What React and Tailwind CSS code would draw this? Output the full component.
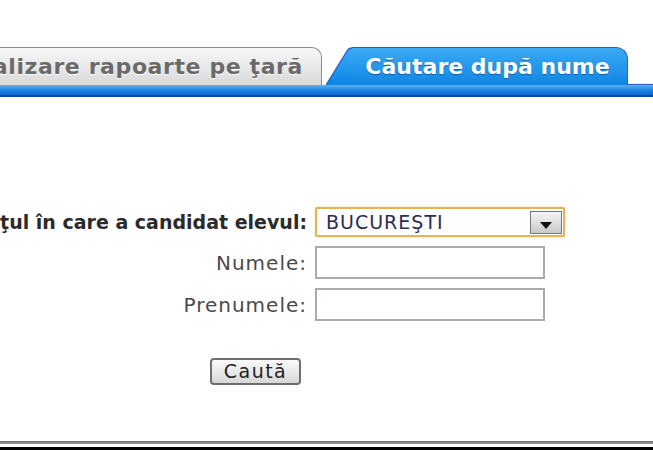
import React from 'react';

const font = "font-['DejaVu_Sans','Verdana',sans-serif]";

function Tabs() {
  return (
    <div>
      {/* tab row */}
      <div className="mt-[47px] flex h-[38px] items-end">
        <div className="flex h-[38px] w-[322px] items-center justify-end overflow-hidden whitespace-nowrap rounded-tr-[10px] border border-b-0 border-l-0 border-[#8e8e8e] bg-gradient-to-b from-[#f8f8f8] to-[#d9d9d9] pr-[18px] text-[22px] font-bold tracking-[0.6px] text-[#6a6a6a] [text-shadow:0_1px_0_#ffffff]">
          Vizualizare rapoarte pe ţară
        </div>
        <svg width="30" height="38" viewBox="0 0 30 38" className="block shrink-0">
          <defs>
            <linearGradient id="tabBlue" x1="0" y1="0" x2="0" y2="1">
              <stop offset="0" stopColor="#3aaaf4" />
              <stop offset="1" stopColor="#0c86e4" />
            </linearGradient>
          </defs>
          <path d="M4 38 L25 4 Q27 1 30 1 L30 38 Z" fill="url(#tabBlue)" />
          <path d="M4 38 L25 4 Q27 1 30 1" fill="none" stroke="#2f5fc4" strokeWidth="1.3" />
        </svg>
        <div className="flex h-[38px] w-[276px] items-center justify-center whitespace-nowrap rounded-tr-[12px] border-r border-t border-[#2f5fc4] bg-gradient-to-b from-[#3aaaf4] to-[#0c86e4] pb-[1px] pr-[4px] text-[22px] font-bold text-white [text-shadow:0_1px_1px_#0b5fb0]">
          Căutare după nume
        </div>
        <div className="h-[2px] flex-1 border-b border-[#2f5fc4] bg-[#dfeefc]" />
      </div>
      {/* blue band under the tabs */}
      <div className="h-[12px] border-b-2 border-[#0a47a8] bg-gradient-to-b from-[#5cb0f2] via-[#1b86e4] to-[#0b66d0]" />
    </div>
  );
}

function Field({ label, bold, children }) {
  return (
    <div className="flex items-center">
      <div
        className={
          'flex w-[307px] shrink-0 justify-end overflow-hidden whitespace-nowrap ' +
          (bold ? 'text-[19px] font-bold text-[#2b2b2b]' : 'text-[20px] tracking-[1px] text-[#4a4a4a]')
        }
      >
        {label}
      </div>
      <div className="ml-[8px]">{children}</div>
    </div>
  );
}

export default function App() {
  return (
    <div className={`relative flex h-[450px] w-[653px] flex-col overflow-hidden bg-white ${font}`}>
      <Tabs />

      {/* search form */}
      <div className="mt-[110px] flex flex-col">
        <Field label="Judeţul în care a candidat elevul:" bold>
          <div className="flex h-[30px] w-[250px] items-center justify-between rounded-[2px] border-2 border-[#e2b457] bg-white pl-[9px] pr-[1px] shadow-[0_0_2px_#f0cf8a]">
            <span className="text-[19px] tracking-[1px] text-[#2c2c54]">BUCUREŞTI</span>
            <div className="flex h-[23px] w-[32px] items-end justify-center border border-[#777777] bg-gradient-to-b from-[#f6f6f6] to-[#c9c9c9] pb-[4px]">
              <svg width="12" height="7" viewBox="0 0 12 7">
                <path d="M0 0 H12 L6 7 Z" fill="#111111" />
              </svg>
            </div>
          </div>
        </Field>

        <div className="mt-[9px]">
          <Field label="Numele:">
            <div className="h-[33px] w-[230px] border-2 border-[#ababab] bg-white" />
          </Field>
        </div>

        <div className="mt-[9px]">
          <Field label="Prenumele:">
            <div className="h-[33px] w-[230px] border-2 border-[#ababab] bg-white" />
          </Field>
        </div>

        <div className="ml-[210px] mt-[37px]">
          <button className="flex h-[27px] w-[91px] items-center justify-center rounded-[4px] border-2 border-[#6e6e6e] bg-gradient-to-b from-[#fbfbfb] to-[#d8d8d8] text-[19px] tracking-[1.5px] text-[#222222]">
            Caută
          </button>
        </div>
      </div>

      {/* bottom window edge */}
      <div className="mt-auto">
        <div className="h-[3px] bg-gradient-to-b from-[#6e6e6e] to-[#9a9a9a]" />
        <div className="h-[3px] bg-white" />
        <div className="h-[3px] bg-black" />
      </div>
    </div>
  );
}
